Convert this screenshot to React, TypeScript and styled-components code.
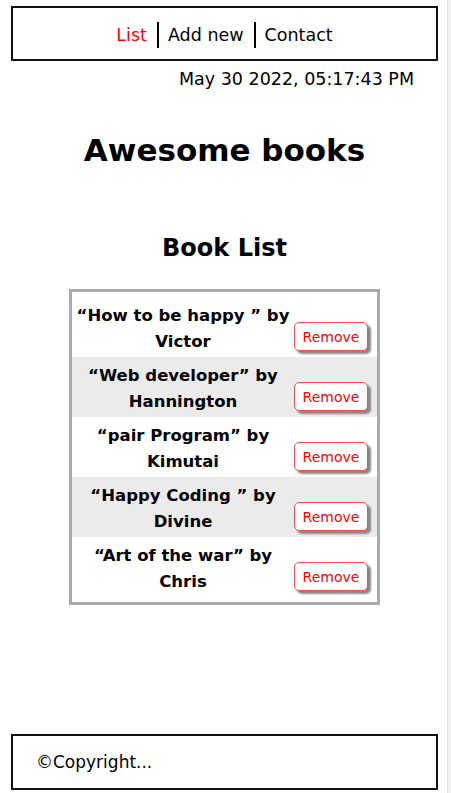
import styled, { createGlobalStyle } from 'styled-components'

const books = [
	{ title: 'How to be happy ', author: 'Victor' },
	{ title: 'Web developer', author: 'Hannington' },
	{ title: 'pair Program', author: 'Kimutai' },
	{ title: 'Happy Coding ', author: 'Divine' },
	{ title: 'Art of the war', author: 'Chris' },
]

const GlobalStyle = createGlobalStyle`
	html {
		background: #f1f1f1;
	}

	body {
		margin: 0;
		width: 447px;
		min-height: 793px;
		background: #fff;
		border-right: 1px solid #dcdcdc;
		font-family: 'Comic Sans MS', 'DejaVu Sans', sans-serif;
		color: #000;
	}
`

const App = () => {
	return (
		<Page>
			<GlobalStyle />
			<Nav>
				<NavLink $active>List</NavLink>
				<NavLink $divider>Add new</NavLink>
				<NavLink $divider>Contact</NavLink>
			</Nav>
			<DateLine>May 30 2022, 05:17:43 PM</DateLine>
			<Title>Awesome books</Title>
			<SubTitle>Book List</SubTitle>
			<BookTable>
				{books.map((book, i) => (
					<BookRow key={book.title} $striped={i % 2 === 1}>
						<BookName>
							“{book.title}” by {book.author}
						</BookName>
						<RemoveButton>Remove</RemoveButton>
					</BookRow>
				))}
			</BookTable>
			<Footer>©Copyright...</Footer>
		</Page>
	)
}

export default App

const Page = styled.div`
	display: flex;
	flex-direction: column;
	min-height: 793px;
	padding: 6px 9px 3px 11px;
	box-sizing: border-box;
`

const Nav = styled.nav`
	display: flex;
	justify-content: center;
	align-items: center;
	height: 55px;
	padding-top: 2px;
	box-sizing: border-box;
	border: 2px solid #111;
	font-size: 17.5px;
`

const NavLink = styled.span<{ $active?: boolean; $divider?: boolean }>`
	color: ${(p) => (p.$active ? '#ff0000' : '#000')};
	padding: 0 10px 0 ${(p) => (p.$divider ? '9px' : '0')};
	border-left: ${(p) => (p.$divider ? '2px solid #000' : 'none')};
	line-height: 26px;

	&:last-child {
		padding-right: 0;
	}
`

const DateLine = styled.div`
	text-align: right;
	font-size: 17.5px;
	padding: 8px 24px 0 0;
`

const Title = styled.h1`
	margin: 43px 0 0;
	text-align: center;
	font-size: 31px;
	font-weight: bold;
`

const SubTitle = styled.h2`
	margin: 66px 0 0;
	text-align: center;
	font-size: 24px;
	font-weight: bold;
`

const BookTable = styled.div`
	width: 311px;
	box-sizing: border-box;
	margin: 27px auto 0;
	padding: 5px 0 5px;
	border: 3px solid #aaa;
`

const BookRow = styled.div<{ $striped: boolean }>`
	display: grid;
	grid-template-columns: 222px 1fr;
	align-items: end;
	height: 60px;
	background: ${(p) => (p.$striped ? '#ebebeb' : '#fff')};
`

const BookName = styled.div`
	text-align: center;
	font-size: 16.5px;
	font-weight: bold;
	line-height: 26px;
	padding-top: 4px;
	align-self: center;
`

const RemoveButton = styled.button`
	justify-self: start;
	width: 74px;
	height: 29px;
	margin-bottom: 6px;
	font-family: 'Comic Sans MS', 'DejaVu Sans', sans-serif;
	font-size: 14px;
	color: #ff0000;
	background: #fff;
	border: 1px solid #ff4d4d;
	border-radius: 5px;
	box-shadow: 3px 3px 2px #888;
	padding: 0;
`

const Footer = styled.footer`
	margin-top: auto;
	height: 56px;
	box-sizing: border-box;
	border: 2px solid #111;
	display: flex;
	align-items: center;
	padding-left: 23px;
	font-size: 17px;
`
